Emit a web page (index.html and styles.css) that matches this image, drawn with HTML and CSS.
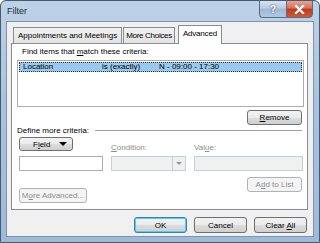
FILE: index.html
```html
<!DOCTYPE html>
<html>
<head>
<meta charset="utf-8">
<link rel="stylesheet" href="styles.css">
</head>
<body>
<div class="window">
  <div class="titlebar">
    <span class="title">Filter</span>
    <div class="caption">
      <div class="cap help">?</div>
      <div class="cap close"><svg width="11" height="9" viewBox="0 0 11 9"><path d="M2 1 L9 8 M9 1 L2 8" stroke="#fff" stroke-width="2.2" stroke-linecap="square"/></svg></div>
    </div>
  </div>
  <div class="client">
    <div class="tabs">
      <div class="tab t1">Appointments and Meetings</div>
      <div class="tab t2">More Choices</div>
      <div class="tab active">Advanced</div>
    </div>
    <div class="panel">
      <div class="label find">Find items that <u>m</u>atch these criteria:</div>
      <div class="list">
        <div class="row"><span class="c1">Location</span><span class="c2">is (exactly)</span><span class="c3">N - 09:00 - 17:30</span></div>
      </div>
      <div class="btnrow r-remove"><div class="btn"><span><u>R</u>emove</span></div></div>
      <div class="sep"><span>Define more criteria:</span><div class="line"></div></div>
      <div class="grid">
        <div class="col c-field">
          <div class="btn field"><span>F<u>i</u>eld</span><span class="tri"></span></div>
          <div class="input"></div>
        </div>
        <div class="col c-cond">
          <div class="dlabel"><u>C</u>ondition:</div>
          <div class="input dis combo"><span class="drop"><span class="tri small"></span></span></div>
        </div>
        <div class="col c-val">
          <div class="dlabel">Val<u>u</u>e:</div>
          <div class="input dis"></div>
        </div>
      </div>
      <div class="btnrow r-add"><div class="btn dis"><span>A<u>d</u>d to List</span></div></div>
      <div class="more"><div class="btn dis wide"><span>M<u>o</u>re Advanced...</span></div></div>
    </div>
    <div class="footer">
      <div class="btn big ok"><span>OK</span></div>
      <div class="btn big"><span>Cancel</span></div>
      <div class="btn big"><span>Clear <u>A</u>ll</span></div>
    </div>
  </div>
</div>
</body>
</html>
```
FILE: styles.css
```css
* { box-sizing: border-box; }
html, body { margin: 0; padding: 0; background: #fff; }
body { font-family: "Liberation Sans", Arial, sans-serif; font-size: 8px; color: #000; }
.window {
  width: 320px; height: 243px;
  border-radius: 6px 6px 0 0;
  border: 1px solid #4a5a6c;
  background: linear-gradient(180deg, #bcd2e8 0%, #a9c4e0 40%, #9dbbd9 100%);
  display: flex; flex-direction: column;
  padding: 0 5px 5px 5px;
  overflow: hidden;
}
.titlebar { height: 20px; display: flex; justify-content: space-between; align-items: flex-start; }
.title { font-size: 9px; color: #1e2b3b; margin-top: 5px; padding-left: 1px; }
.caption { display: flex; margin-right: 1px; margin-top: -1px; }
.cap { height: 18px; border: 1px solid #5b6b80; display: flex; align-items: center; justify-content: center; }
.help { width: 27px; border-radius: 0 0 0 4px; background: linear-gradient(180deg, #d6e3f1 0%, #b6cbe3 45%, #9fb8d6 50%, #b1c8e2 100%); color: #fff; font-weight: bold; font-size: 10px; text-shadow: 0 0 2px #334; border-right: none; }
.close { width: 27px; border-radius: 0 0 4px 0; background: linear-gradient(180deg, #e8a493 0%, #d3705a 45%, #c0391e 50%, #d25a3a 100%); }
.client {
  flex: 1; background: #f0f0f0; border: 1px solid #8193a8;
  display: flex; flex-direction: column; padding: 3px 5px 0 4px;
}
.tabs { display: flex; align-items: flex-end; height: 18px; padding-left: 2px; }
.tab { height: 16px; border: 1px solid #898c95; border-bottom: none; background: linear-gradient(#f2f2f2, #e3e3e3); padding: 1px 4px 0; margin-right: 1px; line-height: 14px; }
.t2 { padding: 1px 2px 0; letter-spacing: -0.3px; }
.tab.active { height: 19px; background: #fff; margin: 0 -2px -1px 2px; padding: 1px 4px 0; position: relative; z-index: 1; letter-spacing: -0.2px; }
.panel { background: #fff; border: 1px solid #898c95; height: 167px; padding: 3px 3px 0 5px; display: flex; flex-direction: column; }
.label.find { padding-left: 5px; line-height: 10px; }
.list { height: 47px; border: 1px solid #abadb3; margin-top: 3px; padding: 1px 1px; }
.row { height: 10px; background: #99c9ef; border: 1px dotted #333; display: flex; line-height: 8px; }
.c1 { width: 82px; padding-left: 3px; }
.c2 { width: 57px; }
.btnrow { display: flex; justify-content: flex-end; padding-right: 2px; }
.r-remove { margin-top: 3px; }
.r-add { margin-top: 6px; }
.btn { border: 1px solid #707070; border-radius: 3px; background: linear-gradient(#f2f2f2 0%, #ebebeb 50%, #dddddd 51%, #cfcfcf 100%); height: 15px; width: 55px; display: flex; align-items: center; justify-content: center; white-space: nowrap; }
.btn.dis { background: #f4f4f4; border-color: #adb2b5; color: #8d8d8d; }
.sep { display: flex; align-items: center; margin-top: 0px; height: 10px; }
.sep .line { flex: 1; height: 1px; background: #a0a0a0; margin-left: 6px; margin-right: 2px; }
.grid { display: flex; margin-top: 2px; padding-left: 2px; }
.col { display: flex; flex-direction: column; justify-content: flex-end; }
.c-field { width: 84px; margin-right: 8px; }
.c-cond { width: 75px; margin-right: 8px; }
.c-val { width: 109px; }
.field { width: 54px; height: 14px; justify-content: space-between; padding: 0 5px 0 13px; margin-bottom: 5px; }
.tri { width: 0; height: 0; border-left: 4px solid transparent; border-right: 4px solid transparent; border-top: 4px solid #000; }
.tri.small { border-left-width: 3px; border-right-width: 3px; border-top: 3px solid #999; }
.input { height: 15px; border: 1px solid #abadb3; background: #fff; }
.input.dis { background: #f0f0f0; border-color: #c4cfdc; }
.combo { display: flex; justify-content: flex-end; }
.drop { width: 13px; border-left: 1px solid #c4cfdc; display: flex; align-items: center; justify-content: center; }
.dlabel { color: #8d8d8d; margin-bottom: 3px; line-height: 10px; }
.more { margin-top: -4px; padding-left: 2px; }
.wide { width: 68px; }
.footer { display: flex; justify-content: flex-end; padding-top: 7px; padding-right: 1px; gap: 7px; }
.big { width: 53px; height: 16px; }
.ok { border-color: #3c7fb1; box-shadow: inset 0 0 0 1px #48d0f8; }
u { text-decoration: underline; }
```
